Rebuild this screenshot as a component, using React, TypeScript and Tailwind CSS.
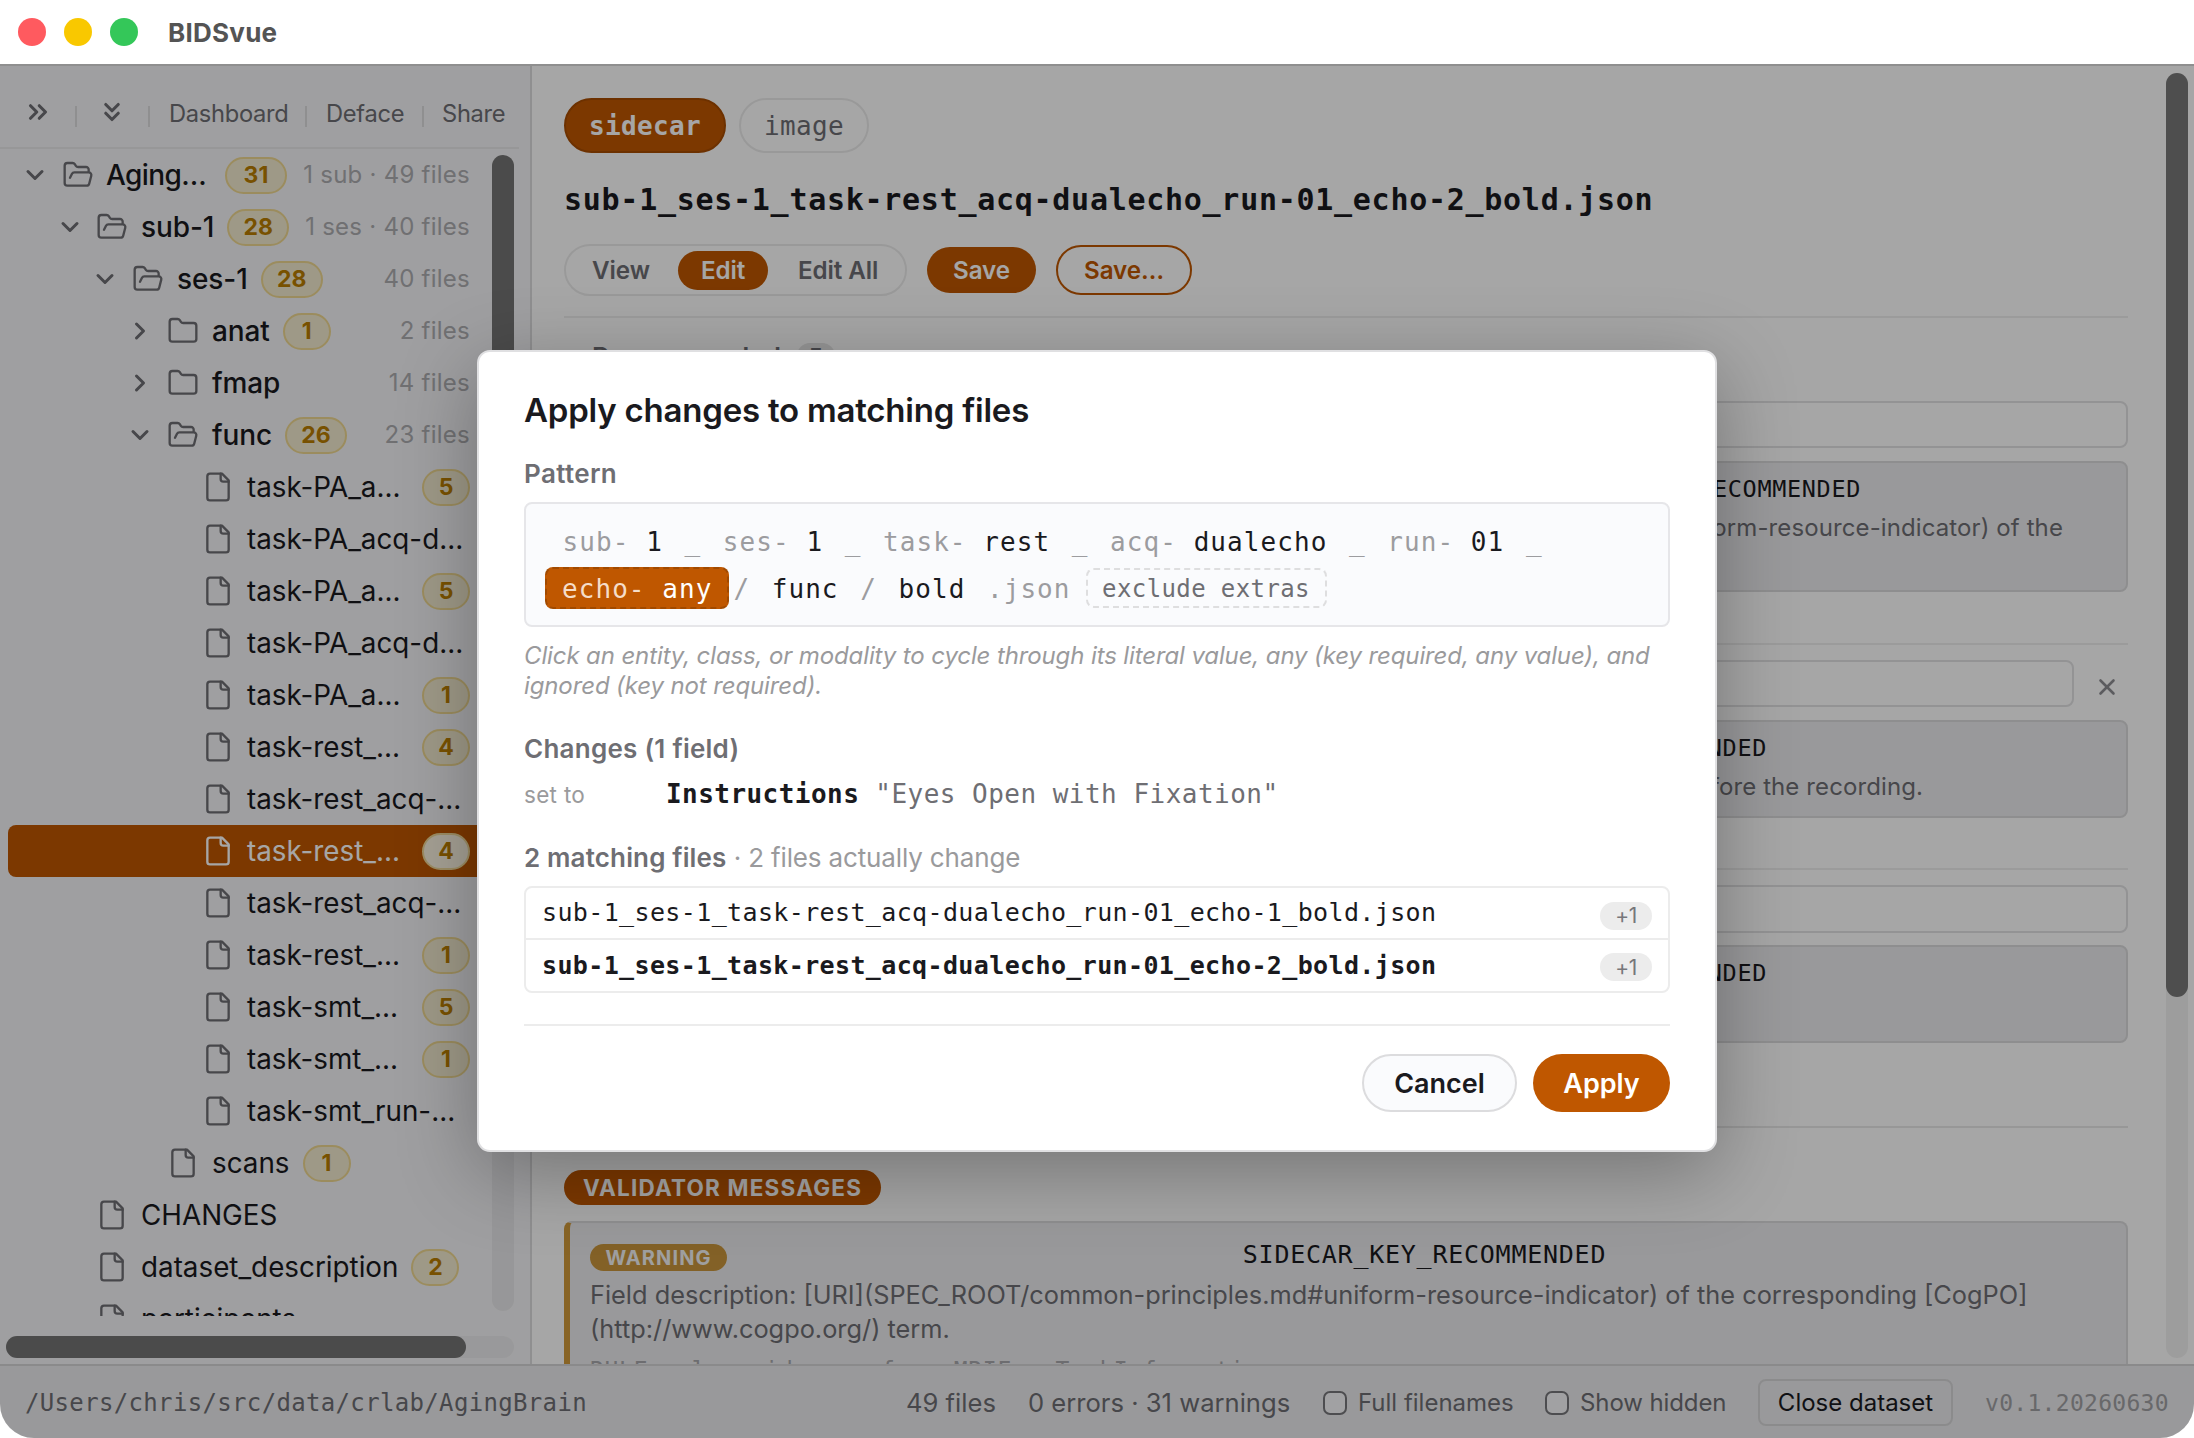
import React from "react";
import { ChevronDown, ChevronRight, ChevronsDown, ChevronsRight, Folder, FolderOpen, X } from "lucide-react";

type TreeNode = {
  name: string;
  depth: number;
  kind: "open" | "closed" | "file";
  badge?: number;
  count?: string;
  selected?: boolean;
  clipped?: boolean;
};

const tree: TreeNode[] = [
  { name: "Aging…", depth: 0, kind: "open", badge: 31, count: "1 sub · 49 files" },
  { name: "sub-1", depth: 1, kind: "open", badge: 28, count: "1 ses · 40 files" },
  { name: "ses-1", depth: 2, kind: "open", badge: 28, count: "40 files" },
  { name: "anat", depth: 3, kind: "closed", badge: 1, count: "2 files" },
  { name: "fmap", depth: 3, kind: "closed", count: "14 files" },
  { name: "func", depth: 3, kind: "open", badge: 26, count: "23 files" },
  { name: "task-PA_a…", depth: 4, kind: "file", badge: 5, clipped: true },
  { name: "task-PA_acq-d…", depth: 4, kind: "file" },
  { name: "task-PA_a…", depth: 4, kind: "file", badge: 5, clipped: true },
  { name: "task-PA_acq-d…", depth: 4, kind: "file" },
  { name: "task-PA_a…", depth: 4, kind: "file", badge: 1, clipped: true },
  { name: "task-rest_…", depth: 4, kind: "file", badge: 4, clipped: true },
  { name: "task-rest_acq-…", depth: 4, kind: "file" },
  { name: "task-rest_…", depth: 4, kind: "file", badge: 4, clipped: true, selected: true },
  { name: "task-rest_acq-…", depth: 4, kind: "file" },
  { name: "task-rest_…", depth: 4, kind: "file", badge: 1, clipped: true },
  { name: "task-smt_…", depth: 4, kind: "file", badge: 5, clipped: true },
  { name: "task-smt_…", depth: 4, kind: "file", badge: 1, clipped: true },
  { name: "task-smt_run-…", depth: 4, kind: "file" },
  { name: "scans", depth: 3, kind: "file", badge: 1 },
  { name: "CHANGES", depth: 1, kind: "file" },
  { name: "dataset_description", depth: 1, kind: "file", badge: 2 },
  { name: "participants", depth: 1, kind: "file" },
];

const indent = ["pl-[21px]", "pl-[56px]", "pl-[91px]", "pl-[126px]", "pl-[161px]"];

const mono = "font-['DejaVu_Sans_Mono',monospace]";

function FileIcon() {
  return (
    <svg width="32" height="32" viewBox="0 0 24 24" fill="none" stroke="currentColor" strokeWidth="1.75" strokeLinecap="round" strokeLinejoin="round">
      <path d="M15 2H6a2 2 0 0 0-2 2v16a2 2 0 0 0 2 2h12a2 2 0 0 0 2-2V7Z" />
      <path d="M14 2v4a2 2 0 0 0 2 2h4" />
    </svg>
  );
}

function TreeRow({ node }: { node: TreeNode }) {
  const iconColor = node.selected ? "text-white" : "text-[#6e6e73]";
  return (
    <div className="relative h-[52px] shrink-0">
      {node.selected && <div className="absolute inset-y-0 left-2 right-0 rounded-l-lg bg-[#bf5700]" />}
      <div className={`relative flex h-[52px] w-[470px] items-center ${indent[node.depth]}`}>
        <div className={`flex w-7 shrink-0 justify-center ${iconColor}`}>
          {node.kind === "open" && <ChevronDown size={28} strokeWidth={2.6} />}
          {node.kind === "closed" && <ChevronRight size={28} strokeWidth={2.6} />}
        </div>
        <div className={`shrink-0 ${node.depth === 1 ? "ml-3" : "ml-[13px]"} ${iconColor}`}>
          {node.kind === "open" && <FolderOpen size={32} strokeWidth={1.75} />}
          {node.kind === "closed" && <Folder size={32} strokeWidth={1.75} />}
          {node.kind === "file" && <FileIcon />}
        </div>
        <span
          className={`whitespace-nowrap pt-px leading-[51px] ${node.kind === "file" ? "text-[27.8px] font-normal" : "text-[28px] font-medium tracking-[-0.1px]"} ${node.selected ? "text-white" : "text-[#1a1a1e]"} ${node.depth === 0 ? "ml-3 w-[106px] tracking-[-0.6px]" : "ml-[13px]"}`}
        >
          {node.name}
        </span>
        {node.badge !== undefined && (
          <span
            className={`flex h-[37px] shrink-0 items-center justify-center rounded-full border-2 pt-px text-[23px] font-bold text-[#b87d00] ${node.badge > 9 ? "w-[62px]" : "w-[48px]"} ${node.clipped ? "ml-auto" : "ml-[13px]"} ${node.selected ? "border-[#f0d99a] bg-[#fdf6e3]" : "border-[#efd891] bg-[#f3ebd0]"}`}
          >
            {node.badge}
          </span>
        )}
        {node.count && <span className="ml-auto whitespace-nowrap text-[24px] tracking-[0.25px] text-[#acacb0]">{node.count}</span>}
      </div>
    </div>
  );
}

function Sidebar() {
  return (
    <aside className="flex h-full w-[532px] shrink-0 flex-col border-r-2 border-[#dcdcde] bg-[#f5f5f7]">
      <div className="flex h-[83px] w-[519px] shrink-0 items-center border-b-2 border-[#e8e8ea] pt-3.5 text-[23.7px] tracking-[-0.3px] text-[#6e6e73]">
        <ChevronsRight size={30} strokeWidth={2.5} className="ml-[23px] -translate-y-0.5" />
        <div className="ml-[22px] mt-1.5 h-[21px] w-0.5 bg-[#dcdcde]" />
        <ChevronsDown size={30} strokeWidth={2.5} className="ml-[20px] -translate-y-0.5" />
        <div className="ml-[21px] mt-1.5 h-[21px] w-0.5 bg-[#dcdcde]" />
        <span className="ml-[19px] w-[119px] whitespace-nowrap">Dashboard</span>
        <div className="ml-[17px] mt-1.5 h-[21px] w-0.5 bg-[#dcdcde]" />
        <span className="ml-[19px] w-[78px] whitespace-nowrap">Deface</span>
        <div className="ml-[18px] mt-1.5 h-[21px] w-0.5 bg-[#dcdcde]" />
        <span className="ml-[18px] whitespace-nowrap">Share</span>
      </div>
      <div className="flex h-[1167px] overflow-hidden">
        <div className="flex w-[492px] shrink-0 flex-col overflow-hidden">
          {tree.map((node, i) => (
            <TreeRow key={i} node={node} />
          ))}
        </div>
        <div className="mt-1.5 mb-[5px] w-[22px] rounded-full bg-[#e9e9eb]">
          <div className="h-[560px] rounded-full bg-[#747474]" />
        </div>
      </div>
      <div className="ml-1.5 mt-5 h-[22px] w-[508px] rounded-full bg-[#ececee]">
        <div className="h-full w-[460px] rounded-full bg-[#747474]" />
      </div>
    </aside>
  );
}

function NoteBox({ className, title, titlePad, body, bodyPad }: { className: string; title: string; titlePad: string; body?: string; bodyPad?: string }) {
  return (
    <div className={`shrink-0 rounded-lg border-2 border-[#dadadc] bg-[#ececee] pt-1.5 text-right whitespace-nowrap ${className}`}>
      <div className={`${mono} text-[23.5px] leading-[40px] tracking-[0.65px] text-[#1a1a1e] ${titlePad}`}>{title}</div>
      {body && <div className={`text-[24px] leading-[38px] tracking-[0.1px] text-[#6e6e73] ${bodyPad}`}>{body}</div>}
    </div>
  );
}

function Main() {
  return (
    <main className="flex min-w-0 flex-1 overflow-hidden bg-white">
      <div className="flex h-[1300px] w-[1596px] shrink-0 flex-col pl-8 pt-8">
        <div className={`flex h-[55px] shrink-0 gap-[13px] text-[26px] tracking-[0.35px] ${mono}`}>
          <div className="flex w-[162px] items-center justify-center rounded-full border-2 border-[#a84c00] bg-[#bf5700] pt-0.5 font-bold text-white">sidecar</div>
          <div className="flex w-[130px] items-center justify-center rounded-full border-2 border-[#ececec] pt-0.5 text-[#6e6e73]">image</div>
        </div>
        <h1 className={`mt-[27px] h-10 shrink-0 whitespace-nowrap text-[30px] leading-10 font-bold tracking-[0.72px] text-[#1a1a1e] ${mono}`}>
          sub-1_ses-1_task-rest_acq-dualecho_run-01_echo-2_bold.json
        </h1>
        <div className="mt-6 flex h-[52px] shrink-0 items-center text-[24.2px] font-semibold tracking-[-0.1px]">
          <div className="flex h-[52px] w-[343px] items-center rounded-full border-2 border-[#ececec] text-[#6e6e73]">
            <span className="w-[110px] pt-0.5 text-center">View</span>
            <span className="ml-0.5 flex h-[39px] w-[90px] items-center justify-center rounded-full bg-[#bf5700] pt-0.5 text-white">Edit</span>
            <span className="flex-1 pt-0.5 pl-[30px]">Edit All</span>
          </div>
          <div className="ml-5 flex h-[46px] w-[109px] items-center justify-center rounded-full bg-[#bf5700] pt-0.5 text-white">Save</div>
          <div className="ml-5 flex h-[50px] w-[136px] items-center justify-center rounded-full border-[2.5px] border-[#bf5700] pt-0.5 text-[#bf5700]">Save…</div>
        </div>
        <div className="mt-5 h-0.5 shrink-0 bg-[#efefef]" />
        <div className="mt-[20px] flex h-9 shrink-0 items-center pl-7 text-[26px] font-semibold text-[#6e6e73]">
          Recommended
          <span className="ml-4 flex h-[26px] w-[38px] items-center justify-center rounded-full bg-[#e6e6e6] text-[20px] font-medium">7</span>
        </div>
        <div className="mt-[27px] ml-[300px] h-[47px] shrink-0 rounded-lg border-2 border-[#e2e2e4]" />
        <NoteBox
          className="mt-[13px] ml-[300px] h-[131px]"
          title="SIDECAR_KEY_RECOMMENDED"
          titlePad="pr-[265px]"
          body="#uniform-resource-indicator) of the"
          bodyPad="pr-[63px]"
        />
        <div className="mt-[51px] h-0.5 shrink-0 bg-[#efefef]" />
        <div className="mt-[15px] ml-[300px] flex h-[47px] shrink-0">
          <div className="w-[1210px] rounded-lg border-2 border-[#e2e2e4]" />
          <div className="flex flex-1 items-center justify-center text-[#8e8e93]">
            <X size={26} strokeWidth={2.4} className="mt-1.5 ml-3" />
          </div>
        </div>
        <NoteBox
          className="mt-[13px] ml-[300px] h-[98px]"
          title="SIDECAR_KEY_RECOMMENDED"
          titlePad="pr-[359px]"
          body="given to participants before the recording."
          bodyPad="pr-[203px]"
        />
        <div className="mt-[50px] h-0.5 shrink-0 bg-[#efefef]" />
        <div className="mt-[15px] ml-[300px] h-[48px] shrink-0 rounded-lg border-2 border-[#e2e2e4]" />
        <NoteBox className="mt-[12px] ml-[300px] h-[98px]" title="KEY_RECOMMENDED" titlePad="pr-[359px]" />
        <div className="mt-[83px] h-0.5 shrink-0 bg-[#e9e9e9]" />
        <div className="mt-[42px] flex h-[35px] w-[317px] shrink-0 items-center justify-center rounded-full bg-[#bf5700] text-[22.5px] font-bold tracking-[1.2px] whitespace-nowrap text-white">
          VALIDATOR MESSAGES
        </div>
        <div className="mt-4 h-[180px] shrink-0 rounded-lg border-2 border-l-[6px] border-[#dadadc] border-l-[#d29a3a] bg-[#ececee] pt-3 pr-5 pl-5">
          <div className="flex h-10 items-center gap-4">
            <span className="mt-1 flex h-[27px] w-[137px] items-center justify-center rounded-full bg-[#c9963c] pt-px text-[20px] font-bold tracking-[1.1px] text-[#f4f4f6]">WARNING</span>
            <span className={`flex-1 text-center text-[25px] tracking-[0.75px] text-[#1a1a1e] ${mono}`}>SIDECAR_KEY_RECOMMENDED</span>
          </div>
          <div className="mt-[3px] text-[25.35px] leading-[34px] whitespace-nowrap text-[#6e6e73]">
            Field description: [URI](SPEC_ROOT/common-principles.md#uniform-resource-indicator) of the corresponding [CogPO]
            <br />
            (http://www.cogpo.org/) term.
          </div>
          <div className={`mt-[6px] text-[23px] leading-[36px] tracking-[0.7px] text-[#a8a8ac] ${mono}`}>RULE rules.sidecars.func.MRIFuncTaskInformation</div>
        </div>
      </div>
      <div className="mt-[7px] mb-1.5 ml-auto mr-1.5 w-[22px] rounded-full bg-[#f2f2f2]">
        <div className="h-[924px] rounded-full bg-[#797979]" />
      </div>
    </main>
  );
}

function Footer() {
  return (
    <footer className="flex h-[74px] shrink-0 items-center rounded-b-[34px] border-t-2 border-[#d4d4d6] bg-[#ececee] pt-0.5 text-[24px] whitespace-nowrap text-[#6e6e73]">
      <span className={`ml-[25px] w-[881px] text-[24px] tracking-[0.34px] ${mono}`}>/Users/chris/src/data/crlab/AgingBrain</span>
      <span className="w-[122px] text-[25.6px]">49 files</span>
      <span className="w-[295px] text-[25.6px]">0 errors · 31 warnings</span>
      <span className="h-6 w-6 rounded-[7px] border-[2.5px] border-[#77777b] bg-[#f8f8fa]" />
      <span className="ml-[11px] w-[187px]">Full filenames</span>
      <span className="h-6 w-6 rounded-[7px] border-[2.5px] border-[#77777b] bg-[#f8f8fa]" />
      <span className="ml-[11px] w-[178px] tracking-[-0.1px]">Show hidden</span>
      <span className="-mt-0.5 flex h-[47px] w-[195px] items-center justify-center rounded-lg border-2 border-[#d6d6d8] pt-0.5 text-[#1a1a1e]">Close dataset</span>
      <span className={`ml-[32px] text-[23px] tracking-[0.3px] text-[#a0a0a4] ${mono}`}>v0.1.20260630</span>
    </footer>
  );
}

function Entity({ label, value }: { label?: string; value: string }) {
  return (
    <span className="flex h-[42px] items-center px-[17.6px] pt-0.5 whitespace-pre">
      {label && <span className="text-[#9c9c9f]">{label} </span>}
      <span>{value}</span>
    </span>
  );
}

function Sep({ children }: { children: React.ReactNode }) {
  return <span className="flex h-[42px] items-center pt-0.5 text-[#9c9c9f]">{children}</span>;
}

function ApplyDialog() {
  return (
    <div className="flex h-[802px] w-[1240px] flex-col rounded-[13px] border-2 border-[#e0e0e2] bg-white px-[45px] shadow-[0_20px_80px_rgba(0,0,0,0.3)]">
      <h2 className="mt-[38px] text-[33px] leading-10 font-semibold tracking-[-0.22px] whitespace-nowrap text-[#1a1a1e]">Apply changes to matching files</h2>
      <h3 className="mt-[27px] text-[26px] leading-[34px] font-semibold tracking-[0.35px] text-[#6e6e73]">Pattern</h3>
      <div className={`mt-[11px] flex h-[125px] flex-wrap content-start gap-x-1 gap-y-[5px] rounded-lg border-2 border-[#e6e6e9] bg-[#fafbfd] px-[19px] pt-4 text-[26px] tracking-[1.06px] text-[#1a1a1e] ${mono}`}>
        <Entity label="sub-" value="1" />
        <Sep>_</Sep>
        <Entity label="ses-" value="1" />
        <Sep>_</Sep>
        <Entity label="task-" value="rest" />
        <Sep>_</Sep>
        <Entity label="acq-" value="dualecho" />
        <Sep>_</Sep>
        <Entity label="run-" value="01" />
        <Sep>_</Sep>
        <span className="flex h-[42px] items-center rounded-lg border-2 border-dashed border-[#a14a00] bg-[#bf5700] pt-0.5 pr-[15px] pl-[15px] whitespace-pre text-white">
          <span className="text-[#f5ddc9]">echo- </span>any
        </span>
        <Sep>/</Sep>
        <Entity value="func" />
        <Sep>/</Sep>
        <Entity value="bold" />
        <Sep>.json</Sep>
        <span className="ml-[11px] flex h-10 w-[241px] items-center justify-center self-center rounded-lg border-2 border-dashed border-[#dededf] pt-0.5 text-[24px] tracking-[0.4px] text-[#6e6e73]">
          exclude extras
        </span>
      </div>
      <p className="mt-[14px] text-[24px] leading-[30px] tracking-[-0.12px] whitespace-nowrap text-[#9a9a9c] italic">
        Click an entity, class, or modality to cycle through its literal value, any (key required, any value), and
        <br />
        ignored (key not required).
      </p>
      <h3 className="mt-[31px] text-[26px] leading-[34px] font-semibold tracking-[0.25px] text-[#6e6e73]">Changes (1 field)</h3>
      <div className="mt-[11px] flex h-[34px] items-center whitespace-nowrap">
        <span className="mt-[2px] w-[142px] text-[22.5px] tracking-[0.3px] text-[#9a9a9c]">set to</span>
        <span className={`text-[26px] font-bold tracking-[0.45px] text-[#1a1a1e] ${mono}`}>Instructions</span>
        <span className={`ml-4 text-[26px] tracking-[0.48px] text-[#6e6e73] ${mono}`}>"Eyes Open with Fixation"</span>
      </div>
      <div className="mt-[30px] text-[26px] leading-[34px] tracking-[-0.15px] whitespace-nowrap text-[#9a9a9c]">
        <span className="font-semibold tracking-[0.15px] text-[#6e6e73]">2 matching files</span> · 2 files actually change
      </div>
      <div className={`mt-[11px] h-[107px] shrink-0 rounded-lg border-2 border-[#ececec] text-[25px] tracking-[0.37px] text-[#1a1a1e] ${mono}`}>
        <div className="flex h-[52px] items-center justify-between border-b-2 border-[#ececec] pr-4 pl-4">
          <span>sub-1_ses-1_task-rest_acq-dualecho_run-01_echo-1_bold.json</span>
          <span className="mt-[5px] flex h-7 w-[52px] items-center justify-center rounded-full bg-[#ececec] pt-px font-['Inter',sans-serif] text-[21px] tracking-[-0.5px] text-[#77777b]">+1</span>
        </div>
        <div className="flex h-[51px] items-center justify-between pr-4 pl-4">
          <span className="font-bold">sub-1_ses-1_task-rest_acq-dualecho_run-01_echo-2_bold.json</span>
          <span className="mt-[3px] flex h-7 w-[52px] items-center justify-center rounded-full bg-[#ececec] pt-px font-['Inter',sans-serif] text-[21px] tracking-[-0.5px] text-[#77777b]">+1</span>
        </div>
      </div>
      <div className="mt-[31px] h-0.5 shrink-0 bg-[#ececec]" />
      <div className="mt-[28px] flex justify-end gap-4 text-[27px] font-semibold">
        <button className="h-[58px] w-[155px] rounded-full border-2 border-[#dcdcde] bg-[#fafbfd] pt-0.5 text-[#1a1a1e]">Cancel</button>
        <button className="h-[58px] w-[137px] rounded-full bg-[#bf5700] pt-0.5 text-white">Apply</button>
      </div>
    </div>
  );
}

const App = () => {
  return (
    <div className="relative flex h-[1438px] w-[2194px] flex-col overflow-hidden bg-white font-['Inter',sans-serif]">
      <header className="flex h-16 shrink-0 items-center pl-[18px]">
        <div className="flex gap-[18px]">
          <div className="h-7 w-7 rounded-full bg-[#ff5a5f]" />
          <div className="h-7 w-7 rounded-full bg-[#f9c800]" />
          <div className="h-7 w-7 rounded-full bg-[#34c759]" />
        </div>
        <span className="ml-[30px] pt-px text-[26px] font-bold tracking-[0.25px] text-[#545454]">BIDSvue</span>
      </header>
      <div className="flex h-[1300px] shrink-0 border-t-2 border-[#dcdcdc]">
        <Sidebar />
        <Main />
      </div>
      <Footer />

      {/* Backdrop and dialog */}
      <div className="absolute inset-x-0 top-16 bottom-0 flex justify-center overflow-hidden rounded-b-[34px] bg-black/35 pt-[286px]">
        <ApplyDialog />
      </div>
    </div>
  );
};

export default App;
